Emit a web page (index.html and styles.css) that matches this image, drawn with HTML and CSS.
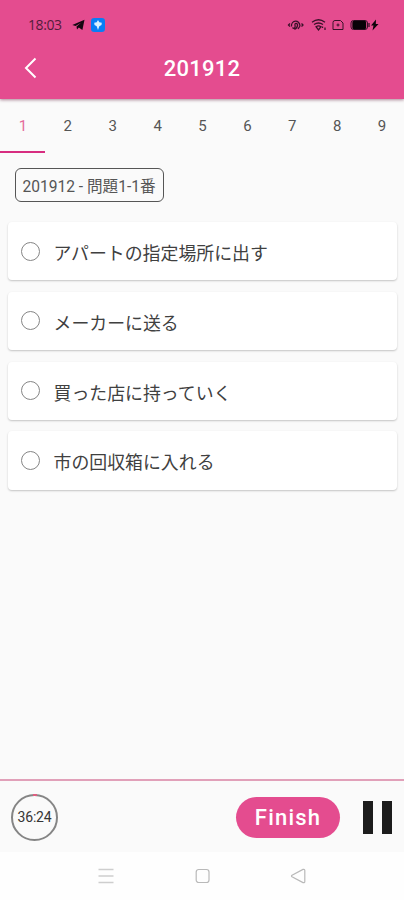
FILE: index.html
```
<!DOCTYPE html>
<html lang="ja">
<head>
<meta charset="utf-8">
<title>201912</title>
<link rel="stylesheet" href="styles.css">
</head>
<body>
<div class="screen">
  <header class="header">
    <div class="status">
      <span class="clock">18:03</span>
      <svg class="telegram" width="13" height="12" viewBox="0 0 13 12"><path d="M.3 6 12.5.8 10.4 11 6.8 8.5 5 10.4 4.5 7.6 9 3.8 3.6 7Z" fill="#130711"/></svg>
      <svg class="app" width="14" height="14" viewBox="0 0 14 14"><rect width="14" height="14" rx="3.2" fill="#087df5"/><path d="M7 2 8.3 4.2 10.8 4.8 10.5 7 8.300 8.300 7 12 5.700 8.300 3.500 7 3.200 4.800 5.700 4.200Z" fill="#d8f0ff"/></svg>
      <svg class="indicators" width="94" height="14" viewBox="0 0 94 14" fill="none" stroke="#391129" stroke-width="1.3">
        <path d="M3 5.500 1.500 7 3 8.500M14.500 5.500 16 7l-1.500 1.500M4.500 8.500C4 2 12.500 1 13 8M5.500 9.500c2 2 3 0 2.500-2.500s3-2 2.500.5-2.500 4.500-3.500 3M11 11l2-3"/>
        <path d="M25 4.200c4-3 9-3 13 0M27 6.500c3-2 6-2 9 0M29 8.700c2-1.200 3-1.200 5 0L31.500 12Z M35.500 8.500v1.500M38 9.500V12"/>
        <path d="M46 4.500q0-2 2-2h5.500l2.500 2.500v6.500h-10Z" stroke-width="1"/><path d="M51 5.500v3M49.500 7h3" stroke-width="1"/>
        <rect x="64" y="2.500" width="16.500" height="9" rx="2.500" stroke-width="1"/><rect x="66" y="3.500" width="12.500" height="7" rx="1" fill="#080307" stroke="#080307"/><path d="M82 5v4"/>
        <path d="M89 1.500 84 7.500h2.500L85.500 12.500 91.500 6h-2.700Z" fill="#10040c" stroke="none"/>
      </svg>
    </div>
    <div class="titlebar">
      <svg class="back" width="14" height="22" viewBox="0 0 14 22"><path d="M11.500 1.500 2 11l9.500 9.500" fill="none" stroke="#fff" stroke-width="2"/></svg>
      <h1 class="title">201912</h1>
    </div>
  </header>
  <nav class="tabs">
    <span class="tab active">1</span><span class="tab">2</span><span class="tab">3</span><span class="tab">4</span><span class="tab">5</span><span class="tab">6</span><span class="tab">7</span><span class="tab">8</span><span class="tab">9</span>
  </nav>
  <main class="content">
    <div class="chip">201912 - 問題1-1番</div>
    <div class="options">
      <div class="option"><span class="radio"></span><span class="label">アパートの指定場所に出す</span></div>
      <div class="option"><span class="radio"></span><span class="label">メーカーに送る</span></div>
      <div class="option"><span class="radio"></span><span class="label">買った店に持っていく</span></div>
      <div class="option"><span class="radio"></span><span class="label">市の回収箱に入れる</span></div>
    </div>
  </main>
  <footer class="footer">
    <div class="timer">36:24</div>
    <div class="finish">Finish</div>
    <div class="pause"><span class="bar"></span><span class="bar"></span></div>
  </footer>
  <div class="sysnav">
    <svg width="16" height="16" viewBox="0 0 16 16" fill="none" stroke="#cecece" stroke-width="1.5"><path d="M.5 1.500h15M.5 8h15M.5 14.500h15"/></svg>
    <svg width="16" height="16" viewBox="0 0 16 16" fill="none" stroke="#b9b9b9" stroke-width="1.200"><rect x="2.200" y="1.500" width="12.800" height="13" rx="2.500"/></svg>
    <svg width="16" height="16" viewBox="0 0 16 16" fill="none" stroke="#b9b9b9" stroke-width="1.200"><path d="M2 7.200 13 1.400q1.800-.5 1.800 1.200v10.800q0 1.700-1.800 1.200L2 8.800q-1-.8 0-1.600Z"/></svg>
  </div>
</div>
</body>
</html>
```
FILE: styles.css
```
* { box-sizing: border-box; }
body { margin: 0; font-family: Roboto, "Noto Sans CJK JP", sans-serif; }
.screen { width: 404px; height: 900px; display: flex; flex-direction: column; background: #fafafa; overflow: hidden; }
.header { height: 99px; flex: none; background: #e44c8f; box-shadow: 0 1px 3px rgba(90, 20, 50, .5); z-index: 1; }
.status { height: 36px; padding: 14px 0 0 28px; display: flex; align-items: center; }
.clock { width: 34px; font: 14px/20px "Open Sans", sans-serif; color: #541c3b; letter-spacing: -.4px; }
.telegram { margin-left: 10px; }
.app { margin-left: 6px; }
.indicators { margin-left: 182px; }
.titlebar { height: 63px; display: grid; grid-template-columns: 24px 1fr 48px; align-items: center; padding: 0 0 0 24px; }
.title { margin: 2px 0 0; text-align: center; color: #fff; font-size: 22px; line-height: 28px; font-weight: 500; letter-spacing: .25px; }
.tabs { height: 54px; flex: none; display: flex; }
.tab { width: 44.900px; flex: none; text-align: center; font-size: 15px; line-height: 54px; color: #555; padding-left: 1px; }
.active { color: #e56b9b; border-bottom: 2px solid #d72d80; }
.content { flex: 1; padding: 15px 7px 0 8px; }
.chip { width: 149px; height: 34px; margin-left: 6.500px; border: 1px solid #555; border-radius: 6px; display: flex; align-items: center; justify-content: center; font-size: 15.600px; line-height: 20px; color: #555; white-space: nowrap; padding-top: 3px; }
.options { margin-top: 20px; display: flex; flex-direction: column; gap: 11.600px; }
.option { height: 58.200px; display: flex; align-items: center; background: #fff; border-radius: 4px; box-shadow: 0 1px 2px rgba(0, 0, 0, .22); padding-left: 13px; }
.radio { width: 19px; height: 19px; border: 1.500px solid #858585; border-radius: 50%; }
.label { margin: 6px 0 0 13.500px; font-size: 17.900px; line-height: 24px; color: #404040; }
.footer { height: 73px; flex: none; border-top: 2px solid #e1a0b9; display: flex; align-items: center; padding: 2px 12px 0 11px; }
.timer { width: 47px; height: 47px; padding-bottom: 1px; border: 2px solid #858585; border-radius: 50%; display: flex; align-items: center; justify-content: center; font-size: 14px; letter-spacing: -.2px; color: #353535; position: relative; }
.timer::before { content: ""; position: absolute; left: 20px; top: -2px; width: 4px; height: 2px; background: #dd6080; }
.finish { width: 104px; height: 41px; margin-left: 178px; border-radius: 21px; background: #e44c8f; color: #fff; display: flex; align-items: center; justify-content: center; font-size: 22px; font-weight: 500; letter-spacing: 1.200px; }
.pause { display: flex; gap: 9px; margin-left: 23px; }
.bar { width: 10px; height: 33px; background: #1c1c1c; }
.sysnav { height: 48px; flex: none; background: #fefefe; display: flex; justify-content: center; align-items: center; gap: 80px; }
```
